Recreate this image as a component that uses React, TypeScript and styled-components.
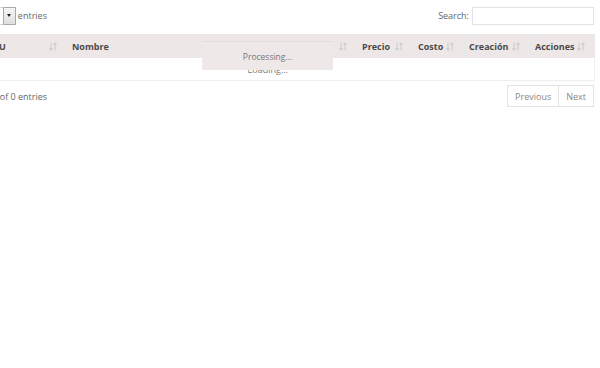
import styled, { createGlobalStyle } from "styled-components";

const GlobalStyle = createGlobalStyle`
  html, body {
    margin: 0;
    padding: 0;
    background: #ffffff;
    overflow: hidden;
  }
  body {
    font-family: "Open Sans", "Liberation Sans", sans-serif;
    font-size: 9px;
    color: #666;
  }
`;

// la tabla esta desplazada a la izquierda (scroll horizontal)
const Wrapper = styled.div`
  position: relative;
  width: 653px;
  margin-left: -59px;
  padding-top: 6px;
`;

const TopBar = styled.div`
  display: flex;
  justify-content: space-between;
  align-items: center;
  height: 19px;
`;

const Length = styled.label`
  display: flex;
  align-items: center;
  color: #666;
`;

const SelectBox = styled.div`
  display: flex;
  align-items: stretch;
  width: 46px;
  height: 18px;
  margin: 0 2px 0 6px;
  box-sizing: border-box;
  border: 1px solid #d0d0d0;
  background: #fff;
  span {
    flex: 1;
    padding-left: 4px;
    line-height: 16px;
  }
`;

const ArrowButton = styled.div`
  width: 11px;
  display: flex;
  align-items: center;
  justify-content: center;
  border: 1px solid #a8a8a8;
  border-radius: 1px;
  background: linear-gradient(#f6f6f6, #dedede);
  margin: -1px -1px -1px 0;
  &::after {
    content: "";
    border-left: 2px solid transparent;
    border-right: 2px solid transparent;
    border-top: 3px solid #222;
  }
`;

const SearchBox = styled.label`
  display: flex;
  align-items: center;
  gap: 3px;
  color: #666;
  input {
    width: 122px;
    height: 18px;
    box-sizing: border-box;
    border: 1px solid #e3e3e3;
    outline: none;
    margin-top: 1px;
  }
`;

const Table = styled.table`
  width: 653px;
  margin-top: 9px;
  border-collapse: collapse;
  table-layout: fixed;
`;

const Th = styled.th<{ $w: number }>`
  width: ${(p) => p.$w}px;
  height: 24px;
  padding: 0 10px 0 4px;
  box-sizing: border-box;
  background: #eee7e7;
  border-left: 1px solid #e4e8e8;
  text-align: left;
  font-size: 9px;
  font-weight: 700;
  color: #4a4a4a;
  white-space: nowrap;
`;

const ThInner = styled.div`
  display: flex;
  align-items: center;
  justify-content: space-between;
`;

const EmptyCell = styled.td`
  height: 22px;
  padding: 0;
  text-align: center;
  color: #777;
  border-bottom: 1px solid #eeeeee;
  border-right: 1px solid #eeeeee;
`;

const Processing = styled.div`
  position: absolute;
  top: 41px;
  left: 261px;
  width: 131px;
  height: 29px;
  box-sizing: border-box;
  padding-top: 9px;
  text-align: center;
  color: #777;
  font-size: 8.5px;
  background: #efe8e8;
  border-top: 1px solid #e2dcdc;
`;

const Footer = styled.div`
  display: flex;
  justify-content: space-between;
  align-items: center;
  margin-top: 4px;
`;

const Info = styled.div`
  color: #666;
  margin-left: -5px;
`;

const Pager = styled.div`
  display: flex;
  border: 1px solid #e2e2e2;
`;

const PageButton = styled.button<{ $first?: boolean }>`
  height: 20px;
  padding: 0 7px;
  border: none;
  border-left: ${(p) => (p.$first ? "none" : "1px solid #e2e2e2")};
  background: #fff;
  color: #888;
  font-family: "Open Sans", "Liberation Sans", sans-serif;
  font-size: 9px;
`;

const SortIcon = () => (
  <svg width="8" height="9" viewBox="0 0 8 9">
    <g stroke="#cfcfcf" strokeWidth="1.2" fill="none">
      <path d="M2 0.5 V8 M0.5 6.3 L2 8 L3.5 6.3" />
      <path d="M6 8.5 V1 M4.5 2.7 L6 1 L7.5 2.7" />
    </g>
  </svg>
);

const columns = [
  { name: "ID", w: 42 },
  { name: "SKU", w: 84 },
  { name: "Nombre", w: 290 },
  { name: "Precio", w: 56 },
  { name: "Costo", w: 51 },
  { name: "Creación", w: 66 },
  { name: "Acciones", w: 64 },
];

export default function App() {
  return (
    <>
      <GlobalStyle />
      <Wrapper>
        <TopBar>
          <Length>
            Show
            <SelectBox>
              <span>10</span>
              <ArrowButton />
            </SelectBox>
            entries
          </Length>
          <SearchBox>
            Search:
            <input type="search" />
          </SearchBox>
        </TopBar>

        <Table>
          <thead>
            <tr>
              {columns.map((c) => (
                <Th key={c.name} $w={c.w}>
                  <ThInner>
                    {c.name}
                    <SortIcon />
                  </ThInner>
                </Th>
              ))}
            </tr>
          </thead>
          <tbody>
            <tr>
              <EmptyCell colSpan={columns.length}>Loading...</EmptyCell>
            </tr>
          </tbody>
        </Table>

        <Processing>Processing...</Processing>

        <Footer>
          <Info>Showing 0 to 0 of 0 entries</Info>
          <Pager>
            <PageButton $first>Previous</PageButton>
            <PageButton>Next</PageButton>
          </Pager>
        </Footer>
      </Wrapper>
    </>
  );
}
